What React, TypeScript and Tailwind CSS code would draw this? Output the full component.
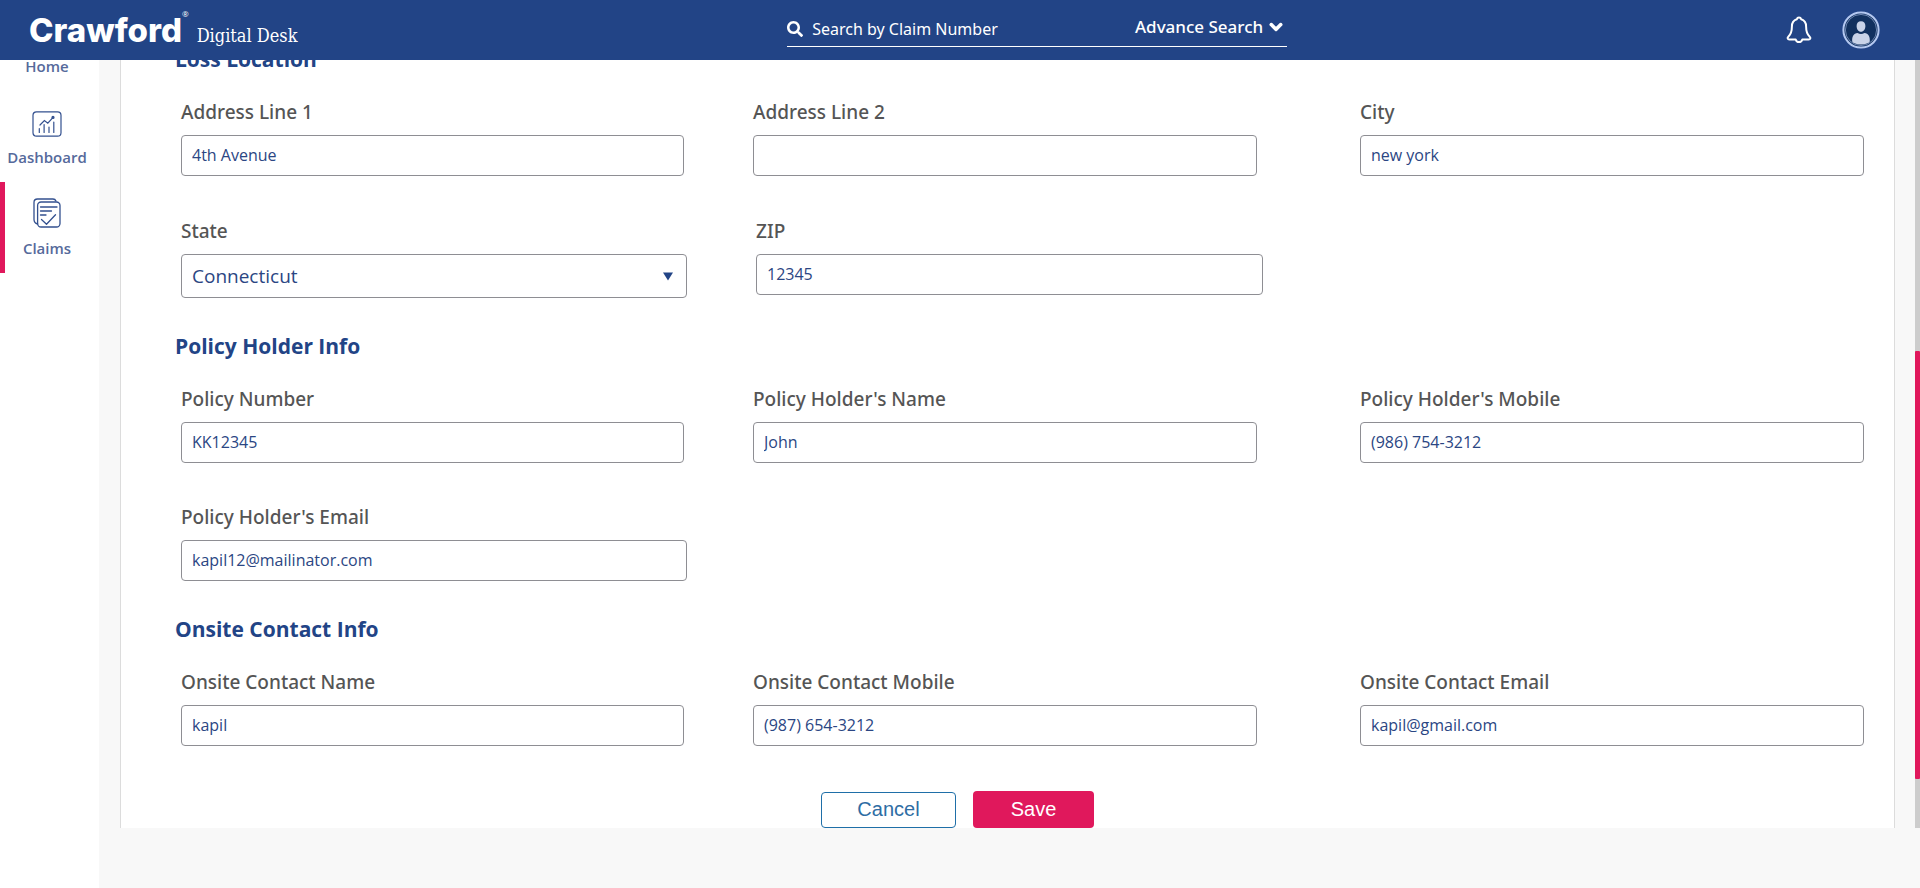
import type { ReactNode } from "react";
import { FaChevronDown, FaSearch } from "react-icons/fa";

type FieldProps = { id: string; label: string; value?: string; type?: string; className?: string };

const boxStyle =
  "block w-full rounded-[4px] border border-[#8e8e93] bg-white px-[10px] text-[#2b4683] outline-none focus:border-[#224486]";
const labelStyle =
  "mb-[11px] block font-['Noto_Sans','Open_Sans',sans-serif] text-[19px] leading-6 font-medium text-[#555555]";

function Field({ id, label, value = "", type = "text", className = "" }: FieldProps) {
  return (
    <div className={className}>
      <label htmlFor={id} className={labelStyle}>
        {label}
      </label>
      <input id={id} type={type} defaultValue={value} className={`${boxStyle} h-[41px] pb-[2px] text-[16px]`} />
    </div>
  );
}

function SectionTitle({ children }: { children: ReactNode }) {
  return <h2 className="mb-[26px] text-[21px] leading-[30px] font-bold text-[#224486]">{children}</h2>;
}

function Row({ children }: { children: ReactNode }) {
  return <div className="ml-[6px] grid grid-cols-[572fr_607fr_504fr]">{children}</div>;
}

function DashboardIcon() {
  return (
    <svg width="30" height="26" viewBox="0 0 30 26" fill="none" stroke="#33508f" strokeWidth="1.2" strokeLinecap="round">
      <rect x="1" y="0.8" width="28" height="24.4" rx="3.5" />
      <path d="M7.3 21.5v-4M12.1 21.5v-8M17 21.5v-5.5M21.8 21.5V11" />
      <path d="M8 14l4.4-4.4 3.4 2.6 4.6-5" />
      <circle cx="21" cy="6.4" r="1" fill="#33508f" />
    </svg>
  );
}

function ClaimsIcon() {
  return (
    <svg
      width="28"
      height="30"
      viewBox="0 0 28 30"
      fill="none"
      stroke="#33508f"
      strokeWidth="1.3"
      strokeLinecap="round"
      strokeLinejoin="round"
    >
      <path d="M4.6 26C2.4 25.4 1 24 1 21.5V4.5C1 2.3 2.3 1 4.5 1H20c1.6 0 2.5.8 3 2" />
      <rect x="4.6" y="4" width="22.4" height="25" rx="3.5" />
      <path d="M7.5 9H24M7.5 13H18.5M7.5 17H13M8.5 21.5l5 4.7 9-9.4" />
    </svg>
  );
}

function BellIcon() {
  return (
    <svg width="26" height="28" viewBox="0 0 26 28" fill="none" stroke="white" strokeWidth="2" strokeLinejoin="round">
      <path d="M10.8 3.2a2.3 2.3 0 0 1 4.4 0c3.4 1 4.9 3.7 4.9 7.3 0 5.2 1 7.9 3.6 10.2 1.3 1.2.7 2.7-1 2.7H16.3c-.5 1.8-1.6 2.7-3.3 2.7s-2.8-.9-3.3-2.7H3.3c-1.7 0-2.3-1.5-1-2.7C4.900 18.400 5.900 15.700 5.900 10.500c0-3.600 1.500-6.300 4.900-7.300Z" />
    </svg>
  );
}

function AvatarIcon() {
  return (
    <svg width="38" height="38" viewBox="0 0 38 38">
      <circle cx="19" cy="19" r="17.6" fill="#12315f" stroke="#b4c8f0" strokeWidth="2" />
      <circle cx="19" cy="19" r="15.6" fill="none" stroke="#8fa6cf" strokeWidth="0.7" />
      <path
        d="M19 10.2c2.8 0 4.4 1.8 4.4 4.7 0 3-1.7 5.800-4.400 5.800s-4.400-2.800-4.400-5.800c0-2.900 1.600-4.700 4.400-4.700Z"
        fill="#c9d3e8"
      />
      <path
        d="M10.2 30.5c-.4-5.3 1.500-8 5.300-8.600 2.200 1.300 4.800 1.300 7 0 3.800.6 5.700 3.300 5.300 8.600-1 1.700-4 2.900-8.800 2.900s-7.800-1.200-8.800-2.900Z"
        fill="#c9d3e8"
      />
    </svg>
  );
}

function NavItem({ label, icon, active = false }: { label: string; icon?: ReactNode; active?: boolean }) {
  return (
    <a
      href="#"
      aria-current={active ? "page" : undefined}
      className={`flex h-[91px] flex-col items-center justify-end border-l-[5px] pr-[10px] pb-[14px] text-[15px] leading-[22px] font-semibold text-[#566a9b] ${
        active ? "border-[#e0185c]" : "border-transparent"
      }`}
    >
      {icon}
      <span className="mt-[9px]">{label}</span>
    </a>
  );
}

export default function App() {
  return (
    <div className="flex min-h-screen flex-col bg-[#f8f8f8] font-['Open_Sans','Noto_Sans',sans-serif]">
      <header className="relative z-10 flex h-[60px] items-center bg-[#224486] text-white">
        <a href="#" className="flex w-[41%] items-baseline pl-[29px]">
          <span className="font-['Inter',sans-serif] text-[33px] leading-9 font-extrabold">Crawford</span>
          <sup className="self-start text-[8px] leading-3">®</sup>
          <span className="ml-[8px] font-['DejaVu_Serif_Condensed','DejaVu_Serif',serif] text-[18px]">Digital Desk</span>
        </a>
        <form className="mt-[-2px] flex h-[36px] w-[500px] items-center border-b border-white">
          <FaSearch className="size-[16px] shrink-0" aria-hidden />
          <input
            type="search"
            aria-label="Search by Claim Number"
            placeholder="Search by Claim Number"
            className="ml-[9px] w-0 flex-1 bg-transparent font-['Noto_Sans','Open_Sans',sans-serif] text-[16px] outline-none placeholder:text-white"
          />
          <button
            type="button"
            className="flex items-center gap-[6px] pr-[4px] pb-[3px] font-['Noto_Sans','Open_Sans',sans-serif] text-[17px] font-medium"
          >
            Advance Search
            <FaChevronDown className="size-[14px]" stroke="currentColor" strokeWidth="48" aria-hidden />
          </button>
        </form>
        <div className="flex flex-1 items-center justify-end gap-[30px] pr-[40px]">
          <button type="button" aria-label="Notifications">
            <BellIcon />
          </button>
          <button type="button" aria-label="Profile">
            <AvatarIcon />
          </button>
        </div>
      </header>

      <div className="flex flex-1 overflow-hidden">
        <nav className="w-[99px] shrink-0 bg-white">
          <div className="-mt-[60px]">
            <NavItem label="Home" />
            <NavItem label="Dashboard" icon={<DashboardIcon />} />
            <NavItem label="Claims" icon={<ClaimsIcon />} active />
          </div>
        </nav>

        <main className="mb-[60px] flex flex-1 self-start pl-[21px]">
          <form className="flex-1 border-x border-[#dcdcdc] bg-white pr-[30px] pl-[54px]">
            <section className="-mt-[16px]">
              <SectionTitle>Loss Location</SectionTitle>
              <div className="flex flex-col gap-[43px]">
                <Row>
                  <Field id="address1" label="Address Line 1" value="4th Avenue" className="pr-[69px]" />
                  <Field id="address2" label="Address Line 2" className="pr-[103px]" />
                  <Field id="city" label="City" value="new york" />
                </Row>
                <Row>
                  <div className="pr-[66px]">
                    <label htmlFor="state" className={labelStyle}>
                      State
                    </label>
                    <div className="relative">
                      <select id="state" defaultValue="Connecticut" className={`${boxStyle} h-[44px] appearance-none text-[19px]`}>
                        <option>Connecticut</option>
                        <option>New York</option>
                      </select>
                      <svg
                        className="pointer-events-none absolute top-[18px] right-[14px]"
                        width="10"
                        height="9"
                        viewBox="0 0 10 9"
                        aria-hidden
                      >
                        <path d="M0 0.5h10L5 8.5Z" fill="#224486" />
                      </svg>
                    </div>
                  </div>
                  <Field id="zip" label="ZIP" value="12345" className="pr-[97px] pl-[3px]" />
                </Row>
              </div>
            </section>

            <section className="mt-[33px]">
              <SectionTitle>Policy Holder Info</SectionTitle>
              <div className="flex flex-col gap-[42px]">
                <Row>
                  <Field id="policy" label="Policy Number" value="KK12345" className="pr-[69px]" />
                  <Field id="holder" label="Policy Holder's Name" value="John" className="pr-[103px]" />
                  <Field id="mobile" label="Policy Holder's Mobile" value="(986) 754-3212" type="tel" />
                </Row>
                <Row>
                  <Field
                    id="email"
                    label="Policy Holder's Email"
                    value="kapil12@mailinator.com"
                    type="email"
                    className="pr-[66px]"
                  />
                </Row>
              </div>
            </section>

            <section className="mt-[33px]">
              <SectionTitle>Onsite Contact Info</SectionTitle>
              <Row>
                <Field id="contact-name" label="Onsite Contact Name" value="kapil" className="pr-[69px]" />
                <Field
                  id="contact-mobile"
                  label="Onsite Contact Mobile"
                  value="(987) 654-3212"
                  type="tel"
                  className="pr-[103px]"
                />
                <Field id="contact-email" label="Onsite Contact Email" value="kapil@gmail.com" type="email" />
              </Row>
            </section>

            <div className="mt-[45px] flex items-end justify-center gap-[17px] pr-[124px] font-['Liberation_Sans',Arial,sans-serif] text-[20px]">
              <button
                type="button"
                className="h-[36px] w-[135px] rounded-[4px] border border-[#1f6fa8] bg-white pb-[2px] leading-none text-[#2e6da4]"
              >
                Cancel
              </button>
              <button type="submit" className="h-[37px] w-[121px] rounded-[4px] bg-[#e0185c] pb-[2px] leading-none text-white">
                Save
              </button>
            </div>
          </form>

          <div className="ml-[20px] flex w-[5px] flex-col bg-[#cdcdcd]" aria-hidden>
            <div className="grow-[291]" />
            <div className="grow-[428] rounded-[1px] bg-[#e0185c]" />
            <div className="grow-[49]" />
          </div>
        </main>
      </div>
    </div>
  );
}
